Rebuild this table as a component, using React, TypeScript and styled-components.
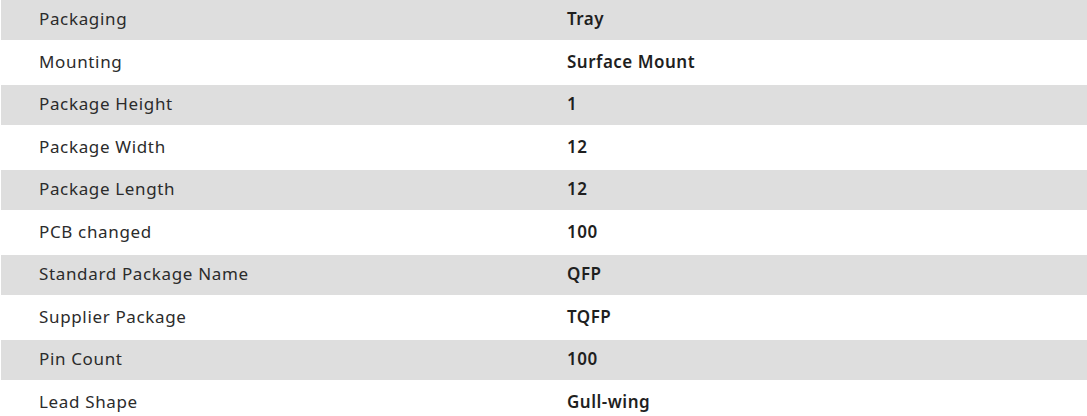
import React from "react";
import styled, { createGlobalStyle } from "styled-components";

const GlobalStyle = createGlobalStyle`
  html, body {
    margin: 0;
    padding: 0;
    background: #ffffff;
  }
  body {
    font-family: "Noto Sans", "Open Sans", sans-serif;
    color: #262626;
  }
`;

const Table = styled.div`
  width: 1086px;
  margin-left: 1px;
  display: flex;
  flex-direction: column;
`;

const Row = styled.div<{ $shaded: boolean }>`
  display: grid;
  grid-template-columns: 528px 1fr;
  align-items: center;
  height: ${(p) => (p.$shaded ? "40px" : "45px")};
  background: ${(p) => (p.$shaded ? "#dedede" : "#ffffff")};
`;

const Label = styled.div`
  padding-left: 38px;
  padding-bottom: 2px;
  font-size: 17px;
  line-height: 22px;
  font-weight: 400;
  color: #2b2b2b;
  white-space: nowrap;
  letter-spacing: 0.65px;
`;

const Value = styled.div`
  padding-left: 38px;
  padding-bottom: 2px;
  font-size: 17px;
  line-height: 22px;
  font-weight: 600;
  color: #1f1f1f;
  white-space: nowrap;
  letter-spacing: 0.5px;
`;

const rows: [string, string][] = [
  ["Packaging", "Tray"],
  ["Mounting", "Surface Mount"],
  ["Package Height", "1"],
  ["Package Width", "12"],
  ["Package Length", "12"],
  ["PCB changed", "100"],
  ["Standard Package Name", "QFP"],
  ["Supplier Package", "TQFP"],
  ["Pin Count", "100"],
  ["Lead Shape", "Gull-wing"],
];

export default function App() {
  return (
    <>
      <GlobalStyle />
      <Table>
        {rows.map(([label, value], i) => (
          <Row key={label} $shaded={i % 2 === 0}>
            <Label>{label}</Label>
            <Value>{value}</Value>
          </Row>
        ))}
      </Table>
    </>
  );
}
